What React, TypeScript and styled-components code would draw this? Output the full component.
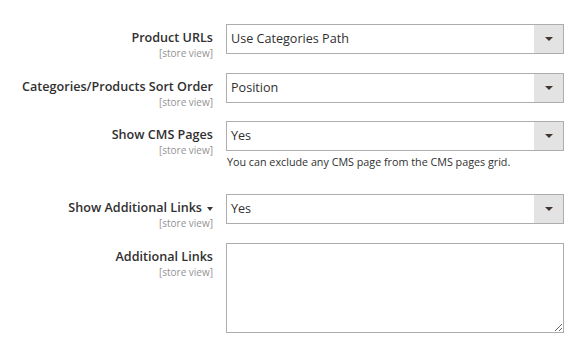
import React from "react";
import styled, { createGlobalStyle } from "styled-components";

const Global = createGlobalStyle`
  html, body { margin: 0; padding: 0; background: #ffffff; }
  body { font-family: "Open Sans", "Liberation Sans", sans-serif; color: #303030; }
  * { box-sizing: border-box; }
`;

const Form = styled.div`
  width: 580px;
  height: 345px;
  padding-top: 24px;
  display: flex;
  flex-direction: column;
  overflow: hidden;
`;

const Row = styled.div<{ $gap: number }>`
  display: grid;
  grid-template-columns: 213px 338px;
  column-gap: 13px;
  align-items: start;
  margin-bottom: ${(p) => p.$gap}px;
`;

const LabelCol = styled.div`
  display: flex;
  flex-direction: column;
  align-items: flex-end;
  padding-top: 6px;
`;

const Label = styled.label`
  font-size: 12.6px;
  font-weight: 600;
  line-height: 16px;
  height: 16px;
  color: #303030;
  white-space: nowrap;
  display: flex;
  align-items: center;
`;

const Caret = styled.span`
  display: inline-block;
  margin-left: 5px;
  width: 0;
  height: 0;
  border-left: 3.5px solid transparent;
  border-right: 3.5px solid transparent;
  border-top: 4px solid #41362f;
  margin-top: 2px;
`;

const Scope = styled.span`
  font-size: 10px;
  line-height: 12px;
  color: #939393;
  margin-top: 1px;
`;

const Control = styled.div`
  display: flex;
  flex-direction: column;
`;

const SelectBox = styled.div`
  height: 30px;
  border: 1px solid #adadad;
  display: flex;
  align-items: stretch;
  background: #ffffff;
`;

const SelectValue = styled.span`
  flex: 1;
  padding-left: 4px;
  font-size: 12.6px;
  line-height: 28px;
  color: #303030;
`;

const SelectButton = styled.span`
  width: 29px;
  background: #e3e3e3;
  display: flex;
  align-items: center;
  justify-content: center;
  &::after {
    content: "";
    width: 0;
    height: 0;
    border-left: 4px solid transparent;
    border-right: 4px solid transparent;
    border-top: 4px solid #41362f;
  }
`;

const Note = styled.div`
  font-size: 10.75px;
  line-height: 14px;
  color: #303030;
  margin-top: 4px;
  padding-left: 1px;
  white-space: nowrap;
`;

const TextArea = styled.textarea`
  display: block;
  width: 338px;
  height: 90px;
  border: 1px solid #adadad;
  border-radius: 0;
  margin: 0;
  padding: 4px;
  font-family: inherit;
  font-size: 12.6px;
  outline: none;
  resize: both;
`;

type Field = {
  label: string;
  value?: string;
  note?: string;
  caret?: boolean;
  textarea?: boolean;
  gap: number;
};

const fields: Field[] = [
  { label: "Product URLs", value: "Use Categories Path", gap: 14 },
  { label: "Categories/Products Sort Order", value: "Position", gap: 13 },
  { label: "Show CMS Pages", value: "Yes", note: "You can exclude any CMS page from the CMS pages grid.", gap: 25 },
  { label: "Show Additional Links", value: "Yes", caret: true, gap: 14 },
  { label: "Additional Links", textarea: true, gap: 0 },
];

export default function App() {
  return (
    <>
      <Global />
      <Form>
        {fields.map((f) => (
          <Row key={f.label} $gap={f.gap}>
            <LabelCol>
              <Label>
                {f.label}
                {f.caret && <Caret />}
              </Label>
              <Scope>[store view]</Scope>
            </LabelCol>
            <Control>
              {f.textarea ? (
                <TextArea />
              ) : (
                <SelectBox>
                  <SelectValue>{f.value}</SelectValue>
                  <SelectButton />
                </SelectBox>
              )}
              {f.note && <Note>{f.note}</Note>}
            </Control>
          </Row>
        ))}
      </Form>
    </>
  );
}
